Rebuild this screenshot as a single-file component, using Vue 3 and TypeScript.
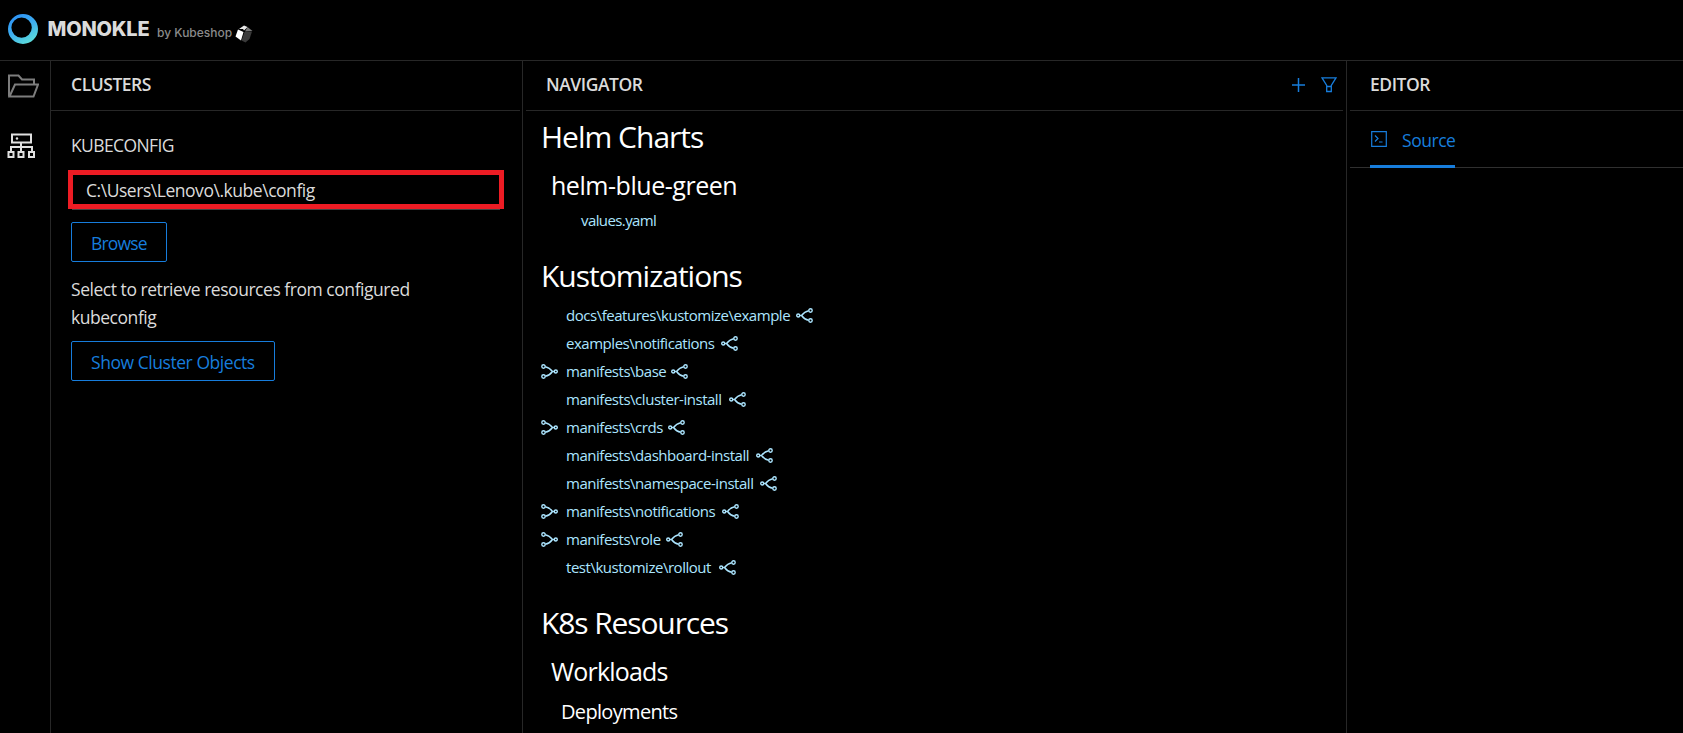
<script setup lang="ts">
interface Kustomization {
  name: string
  incoming: boolean
  width: number
}

const kustomizations: Kustomization[] = [
  { name: 'docs\\features\\kustomize\\example', incoming: false, width: 224 },
  { name: 'examples\\notifications', incoming: false, width: 149 },
  { name: 'manifests\\base', incoming: true, width: 99 },
  { name: 'manifests\\cluster-install', incoming: false, width: 157 },
  { name: 'manifests\\crds', incoming: true, width: 96 },
  { name: 'manifests\\dashboard-install', incoming: false, width: 184 },
  { name: 'manifests\\namespace-install', incoming: false, width: 188 },
  { name: 'manifests\\notifications', incoming: true, width: 150 },
  { name: 'manifests\\role', incoming: true, width: 94 },
  { name: 'test\\kustomize\\rollout', incoming: false, width: 147 },
]
</script>

<template>
  <div class="app">
    <header class="topbar">
      <svg class="ring" viewBox="0 0 30 30">
        <defs>
          <linearGradient id="ringFill" x1="0.2" y1="0" x2="0.75" y2="1">
            <stop offset="0" stop-color="#2b8ff5" />
            <stop offset="0.5" stop-color="#3fb0f0" />
            <stop offset="1" stop-color="#5fe0d8" />
          </linearGradient>
        </defs>
        <path fill="url(#ringFill)" fill-rule="evenodd" d="M15 0a15 15 0 1 1 0 30a15 15 0 0 1 0-30zM13.6 3.4a10.2 10.2 0 1 0 0 20.4a10.2 10.2 0 0 0 0-20.4z" />
      </svg>
      <span class="brand">MONOKLE</span>
      <span class="by">by Kubeshop</span>
      <svg class="cube" viewBox="0 0 18 18">
        <path fill="#fff" d="M3 4.500L8.500 7L6 15.500L.500 11.500z" />
        <path fill="#e8e8e8" d="M4 4L9 .500L12.500 2L9 5.500L8 4z" />
        <path fill="#777" d="M12.500 2L17.500 6L10 6.500z" />
        <path fill="#3a3a3a" d="M9.500 7L17 6.500L14.500 14L10.500 17.500L6.500 15.500z" />
      </svg>
    </header>

    <div class="body">
      <nav class="rail">
        <svg class="folder" viewBox="0 0 31 24">
          <path d="M1 22.500V1.500H10.500L14 5.500H26V10M1.500 22.500L7 10.500H30L25.500 22.500z" />
        </svg>
        <svg class="cluster" viewBox="0 0 28 26">
          <path d="M5 1.500H24V9.500H5zM14 10V19M4 19V14H25V19M1.500 19H6.500V24H1.500zM11.500 19H16.500V24H11.500zM22 19H27V24H22z" />
          <circle cx="10" cy="5.500" r="1.200" />
        </svg>
      </nav>

      <section class="panel clusters">
        <div class="head"><h2>CLUSTERS</h2></div>
        <div class="form">
          <div class="label">KUBECONFIG</div>
          <div class="field"><span>C:\Users\Lenovo\.kube\config</span></div>
          <div class="underline"></div>
          <button class="btn browse"><span>Browse</span></button>
          <p>Select to retrieve resources from configured<br />kubeconfig</p>
          <button class="btn show"><span>Show Cluster Objects</span></button>
        </div>
      </section>

      <section class="panel navigator">
        <div class="head">
          <h2>NAVIGATOR</h2>
          <svg class="plus" viewBox="0 0 13 14"><path d="M6.500 0V14M0 7H13" /></svg>
          <svg class="funnel" viewBox="0 0 16 16"><path d="M1 .800H15L10.300 8.500V14.500H5.700V8.500zM5.700 9.500H10.300" /></svg>
        </div>
        <div class="tree">
          <h1 class="helm">Helm Charts</h1>
          <h3 class="bluegreen">helm-blue-green</h3>
          <div class="values">values.yaml</div>
          <h1 class="kust">Kustomizations</h1>
          <ul>
            <li v-for="k in kustomizations" :key="k.name">
              <span class="slot">
                <svg v-if="k.incoming" class="link flip" viewBox="0 0 17 15">
                  <path d="M4 7.500L5.500 7.500Q8.500 3.500 12.700 2.700M5.500 7.500Q8.500 11.500 12.700 12.300" />
                  <circle cx="2.200" cy="7.500" r="1.500" /><circle cx="14.500" cy="2.500" r="1.700" /><circle cx="14.500" cy="12.500" r="1.700" />
                </svg>
              </span>
              <span class="name" :style="{ width: k.width + 'px' }">{{ k.name }}</span>
              <svg class="link" viewBox="0 0 17 15">
                <path d="M4 7.500L5.500 7.500Q8.500 3.500 12.700 2.700M5.500 7.500Q8.500 11.500 12.700 12.300" />
                <circle cx="2.200" cy="7.500" r="1.500" /><circle cx="14.500" cy="2.500" r="1.700" /><circle cx="14.500" cy="12.500" r="1.700" />
              </svg>
            </li>
          </ul>
          <h1 class="k8s">K8s Resources</h1>
          <h3 class="workloads">Workloads</h3>
          <h4>Deployments</h4>
        </div>
      </section>

      <section class="panel editor">
        <div class="head"><h2>EDITOR</h2></div>
        <div class="tabs">
          <div class="tab">
            <svg class="code" viewBox="0 0 16 16"><path d="M.700 .700H15.300V15.300H.700zM4 4.500L7 7.500L4 10.500M8 11H11.500" /></svg>
            <span>Source</span>
          </div>
        </div>
      </section>
    </div>
  </div>
</template>

<style>
html,
body {
  background: #000;
  overflow: hidden;
}
</style>

<style scoped>
* {
  box-sizing: border-box;
}
.app {
  width: 100%;
  height: 733px;
  display: flex;
  flex-direction: column;
  overflow: hidden;
  background: #000;
  color: #dbdbdb;
  font: 17.5px/27px 'Open Sans', 'Noto Sans', sans-serif;
  letter-spacing: -0.46px;
  white-space: nowrap;
}
svg {
  display: block;
  flex: none;
  fill: none;
}
h1,
h2,
h3,
h4,
p,
ul {
  margin: 0;
  padding: 0;
  font-weight: 400;
}
.topbar {
  height: 61px;
  flex: none;
  display: flex;
  border-bottom: 1px solid #272727;
}
.ring {
  width: 30px;
  height: 30px;
  margin: 14px 0 0 8px;
}
.brand {
  width: 102px;
  margin: 15px 0 0 9.5px;
  font: 800 20px/28px Inter, sans-serif;
  letter-spacing: -0.2px;
}
.by {
  width: 76px;
  margin: 21px 0 0 7.5px;
  font: 500 12px/24px Inter, sans-serif;
  letter-spacing: 0;
  color: #8b8b8b;
}
.cube {
  width: 18px;
  height: 18px;
  margin: 25px 0 0 2px;
}
.body {
  flex: 1;
  min-height: 0;
  display: flex;
}
.rail {
  width: 51px;
  flex: none;
  border-right: 1px solid #272727;
}
.folder {
  width: 31px;
  height: 24px;
  margin: 13px 0 0 8px;
  stroke: #7d7d7d;
  stroke-width: 2;
}
.cluster {
  width: 28px;
  height: 26px;
  margin: 35px 0 0 7px;
  stroke: #e0e0e0;
  stroke-width: 2;
}
.cluster circle {
  fill: #e0e0e0;
  stroke: none;
}
.panel {
  flex: none;
  min-width: 0;
}
.clusters {
  width: 472px;
  padding-right: 2px;
  border-right: 1px solid #272727;
}
.navigator {
  width: 824px;
  padding: 0 3px;
  border-right: 1px solid #272727;
}
.editor {
  width: 336px;
  padding-left: 3px;
}
.head {
  height: 50px;
  display: flex;
  align-items: flex-start;
  border-bottom: 1px solid #272727;
}
h2 {
  font-size: 17.5px;
  font-weight: 600;
  line-height: 27px;
  margin: 10px 0 0 20px;
}
.form {
  padding: 21px 0 0 20px;
}
.label {
  letter-spacing: -0.6px;
}
.field {
  width: 436px;
  height: 39px;
  margin: 11px 0 0 -3px;
  padding-left: 13px;
  border: 5px solid #ed1c24;
  line-height: 31px;
}
.underline {
  width: 428px;
  height: 1px;
  margin-left: 1px;
  background: #434343;
}
.btn {
  display: block;
  height: 40px;
  padding: 0 0 0 19px;
  border: 1px solid #177ddc;
  border-radius: 2px;
  background: transparent;
  color: #177ddc;
  font: inherit;
  line-height: 41px;
  text-align: left;
}
.browse {
  width: 96px;
  margin-top: 12px;
  letter-spacing: -0.85px;
}
.show {
  width: 204px;
  margin-top: 10px;
  letter-spacing: -0.45px;
}
p {
  margin-top: 14px;
  line-height: 27.5px;
}
.plus {
  width: 13px;
  height: 14px;
  margin: 17px 16px 0 auto;
  stroke: #177ddc;
  stroke-width: 1.5;
}
.funnel {
  width: 16px;
  height: 16px;
  margin: 16px 6px 0 0;
  stroke: #177ddc;
  stroke-width: 1.3;
}
.tree {
  padding-left: 15px;
  color: #fff;
}
h1 {
  font-size: 30px;
  line-height: 38px;
  letter-spacing: -1px;
}
h3 {
  font-size: 25px;
  line-height: 32px;
  padding-left: 10px;
}
h4 {
  margin-top: 11px;
  font-size: 20px;
  line-height: 28px;
  padding-left: 20px;
  letter-spacing: -0.67px;
}
.helm {
  margin-top: 7px;
}
.bluegreen {
  margin-top: 13px;
}
.values {
  margin-top: 7px;
  padding-left: 40px;
  font-size: 15px;
  line-height: 24px;
  letter-spacing: -0.6px;
  color: #ace5ff;
}
.kust {
  margin-top: 25px;
}
ul {
  margin-top: 6px;
  list-style: none;
}
li {
  height: 28px;
  display: flex;
  align-items: center;
  font-size: 15px;
  line-height: 24px;
  letter-spacing: -0.47px;
  color: #ace5ff;
}
.slot {
  width: 25px;
  flex: none;
}
.name {
  margin-right: 6px;
  flex: none;
}
.link {
  width: 17px;
  height: 15px;
  stroke: #ace5ff;
  stroke-width: 1.4;
}
.flip {
  transform: scaleX(-1);
}
.k8s {
  margin-top: 23px;
  letter-spacing: -1.12px;
}
.workloads {
  margin-top: 13px;
  letter-spacing: -0.8px;
}
.tabs {
  height: 57px;
  padding-left: 20px;
  border-bottom: 1px solid #303030;
}
.tab {
  width: 85px;
  height: 57px;
  display: flex;
  border-bottom: 3px solid #177ddc;
  color: #177ddc;
}
.code {
  width: 16px;
  height: 16px;
  margin: 20px 15px 0 1px;
  stroke: #177ddc;
  stroke-width: 1.2;
}
.tab span {
  margin-top: 16px;
}
</style>
